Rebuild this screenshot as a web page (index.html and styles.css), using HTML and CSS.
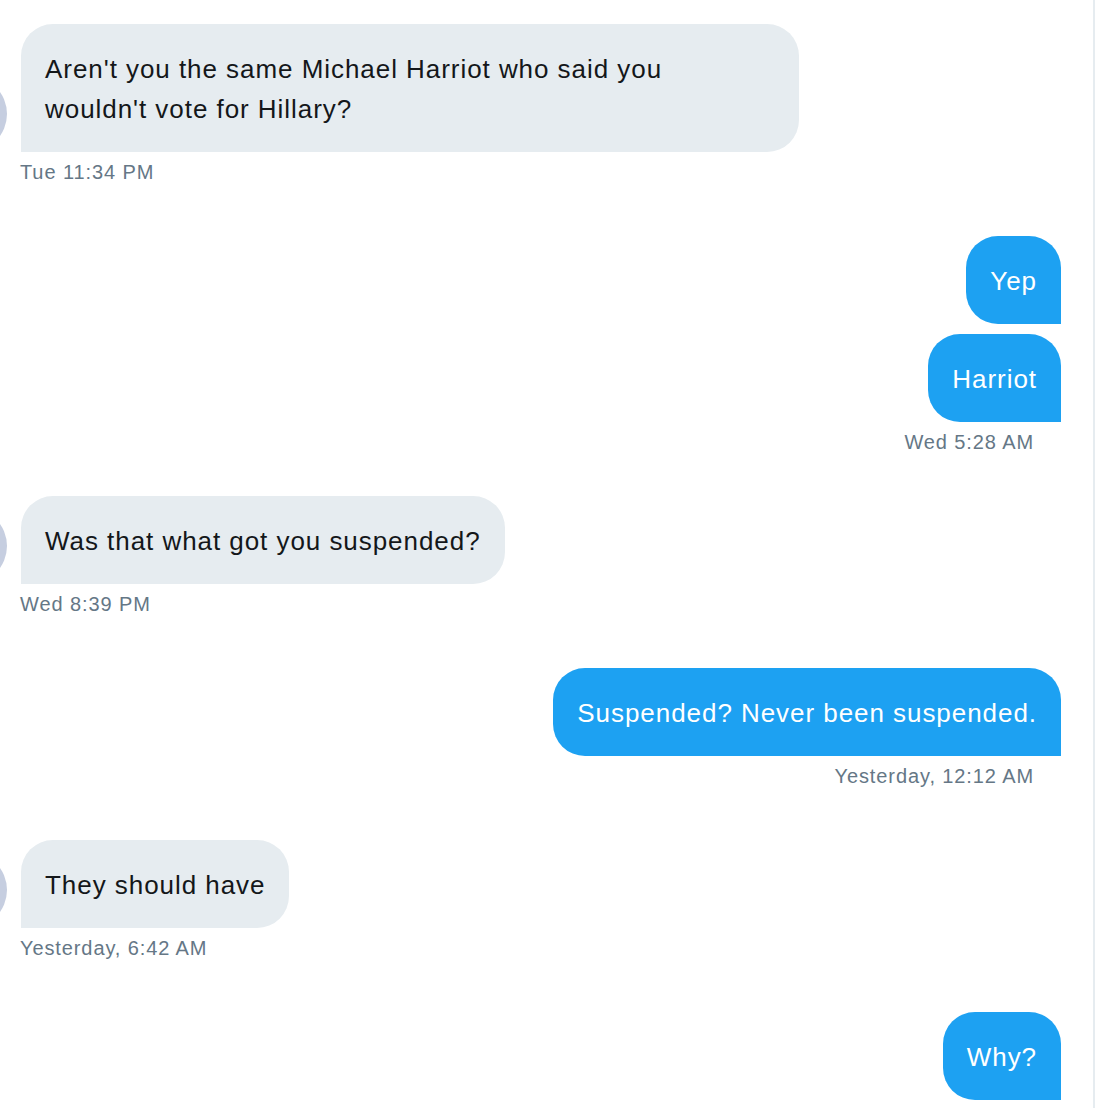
FILE: index.html
```html
<!DOCTYPE html>
<html>
<head>
  <title>Messages</title>
  <link rel="stylesheet" href="styles.css">
</head>
<body>
  <div class="chat">

    <div class="msg in">
      <div class="row">
        <span class="avatar"></span>
        <div class="bubble wide">Aren't you the same Michael Harriot who said you<br>wouldn't vote for Hillary?</div>
      </div>
      <div class="time">Tue 11:34 PM</div>
    </div>

    <div class="msg out tight">
      <div class="bubble">Yep</div>
      <div class="bubble">Harriot</div>
      <div class="time">Wed 5:28 AM</div>
    </div>

    <div class="msg in">
      <div class="row">
        <span class="avatar"></span>
        <div class="bubble">Was that what got you suspended?</div>
      </div>
      <div class="time">Wed 8:39 PM</div>
    </div>

    <div class="msg out">
      <div class="bubble">Suspended? Never been suspended.</div>
      <div class="time">Yesterday, 12:12 AM</div>
    </div>

    <div class="msg in">
      <div class="row">
        <span class="avatar"></span>
        <div class="bubble">They should have</div>
      </div>
      <div class="time">Yesterday, 6:42 AM</div>
    </div>

    <div class="msg out">
      <div class="bubble">Why?</div>
    </div>

  </div>
</body>
</html>
```

FILE: styles.css
```css
html, body {
  margin: 0;
  padding: 0;
  background: #ffffff;
}

.chat {
  box-sizing: border-box;
  width: 1095px;
  height: 1108px;
  overflow: hidden;
  padding: 24px 32px 0 21px;
  border-right: 2px solid #e6ecf0;
  font-family: "Liberation Sans", Arial, sans-serif;
}

.msg {
  display: flex;
  flex-direction: column;
  margin-bottom: 52px;
}

.msg.tight {
  margin-bottom: 42px;
}

.msg.in {
  align-items: flex-start;
}

.msg.out {
  align-items: flex-end;
}

.row {
  position: relative;
}

.avatar {
  position: absolute;
  left: -90px;
  bottom: 0;
  width: 76px;
  height: 76px;
  border-radius: 50%;
  background: #c6cee0;
}

.bubble {
  box-sizing: border-box;
  padding: 25px 24px 23px;
  font-size: 26px;
  line-height: 40px;
  letter-spacing: 0.95px;
  white-space: nowrap;
}

.bubble + .bubble {
  margin-top: 10px;
}

.bubble.wide {
  width: 778px;
}

.msg.in .bubble {
  background: #e6ecf0;
  color: #14171a;
  border-radius: 32px 32px 32px 0;
}

.msg.out .bubble {
  background: #1da1f2;
  color: #ffffff;
  border-radius: 32px 32px 0 32px;
}

.time {
  margin-top: 8px;
  margin-left: -1px;
  font-size: 20px;
  line-height: 24px;
  letter-spacing: 0.9px;
  color: #657786;
}

.msg.out .time {
  padding-right: 27px;
}
```
